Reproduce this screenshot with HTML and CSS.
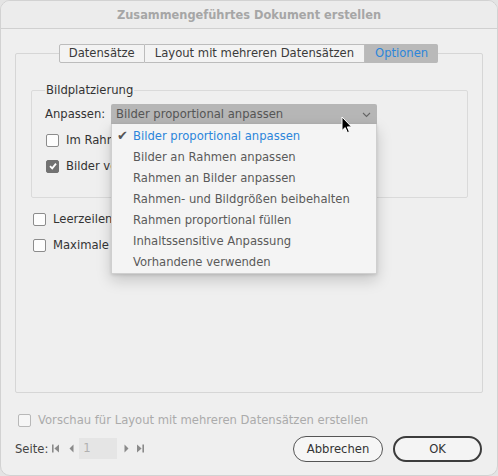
FILE: index.html
```html
<!DOCTYPE html>
<html lang="de">
<head>
<meta charset="utf-8">
<title>Zusammengeführtes Dokument erstellen</title>
<link rel="stylesheet" href="styles.css">
</head>
<body>
<div class="window">
  <div class="titlebar">Zusammengeführtes Dokument erstellen</div>
  <div class="content">
    <div class="tabbox">
      <div class="tabs">
        <div class="tab">Datensätze</div>
        <div class="tab">Layout mit mehreren Datensätzen</div>
        <div class="tab active">Optionen</div>
      </div>
      <fieldset class="group">
        <legend>Bildplatzierung</legend>
        <div class="row fit-row">
          <span class="label">Anpassen:</span>
          <div class="select">
            <span>Bilder proportional anpassen</span>
            <svg class="chev" width="9" height="6" viewBox="0 0 9 6"><path d="M1 1 L4.5 4.5 L8 1" fill="none" stroke="#666" stroke-width="1.1"/></svg>
          </div>
        </div>
        <label class="row check-row first"><span class="cb"></span>Im Rahmen zentrieren</label>
        <label class="row check-row"><span class="cb checked"><svg width="10" height="10" viewBox="0 0 10 10"><path d="M2 5.2 L4.2 7.4 L8 2.6" fill="none" stroke="#fff" stroke-width="1.8"/></svg></span>Bilder verknüpfen</label>
      </fieldset>
      <label class="row check-row outer first-outer"><span class="cb"></span>Leerzeilen für leere Felder entfernen</label>
      <label class="row check-row outer"><span class="cb"></span>Maximale Länge für Datensätze festlegen</label>
    </div>
    <label class="row preview"><span class="cb disabled"></span>Vorschau für Layout mit mehreren Datensätzen erstellen</label>
    <div class="footer">
      <div class="pager">
        <span class="seite">Seite:</span>
        <svg class="nav first" width="8" height="9" viewBox="0 0 8 9"><rect x="0" y="0.5" width="1.6" height="8" fill="#8a8a8a"/><path d="M7 0.5 L2.4 4.5 L7 8.5 Z" fill="#8a8a8a"/></svg>
        <svg class="nav prev" width="5" height="9" viewBox="0 0 5 9"><path d="M4.5 0.5 L0.5 4.5 L4.5 8.5 Z" fill="#8a8a8a"/></svg>
        <span class="pagefield">1</span>
        <svg class="nav next" width="5" height="9" viewBox="0 0 5 9"><path d="M0.5 0.5 L4.5 4.5 L0.5 8.5 Z" fill="#8a8a8a"/></svg>
        <svg class="nav last" width="8" height="9" viewBox="0 0 8 9"><path d="M1 0.5 L5.6 4.5 L1 8.5 Z" fill="#8a8a8a"/><rect x="6.4" y="0.5" width="1.6" height="8" fill="#8a8a8a"/></svg>
      </div>
      <div class="buttons">
        <button class="btn">Abbrechen</button>
        <button class="btn default">OK</button>
      </div>
    </div>
  </div>

  <div class="menu">
    <div class="item selected"><span class="tick">✔</span>Bilder proportional anpassen</div>
    <div class="item">Bilder an Rahmen anpassen</div>
    <div class="item">Rahmen an Bilder anpassen</div>
    <div class="item">Rahmen- und Bildgrößen beibehalten</div>
    <div class="item">Rahmen proportional füllen</div>
    <div class="item">Inhaltssensitive Anpassung</div>
    <div class="item">Vorhandene verwenden</div>
  </div>
  <svg class="cursor" width="12" height="18" viewBox="0 0 12 18"><path d="M1 1 L1 14.5 L4.2 11.6 L6.4 16.6 L8.4 15.7 L6.3 10.9 L10.6 10.9 Z" fill="#000" stroke="#fff" stroke-width="1" stroke-linejoin="round"/></svg>
</div>
</body>
</html>
```

FILE: styles.css
```css
html, body {
  margin: 0;
  padding: 0;
  background: #e4e4e4;
}
body {
  font-family: "DejaVu Sans", "Liberation Sans", sans-serif;
  font-size: 11.6px;
  color: #3a3a3a;
}
.window {
  position: relative;
  width: 498px;
  height: 476px;
  box-sizing: border-box;
  background: #efefef;
  border-radius: 10px;
  border: 1px solid #d2d2d2;
  overflow: hidden;
}
.titlebar {
  height: 27px;
  border-bottom: 1px solid #d0d0d0;
  background: #ececec;
  text-align: center;
  line-height: 28px;
  font-weight: bold;
  font-size: 11.4px;
  color: #a6a6a6;
}
.content {
  padding: 0 14px 0 14px;
}
.tabbox {
  margin-top: 24px;
  height: 340px;
  box-sizing: border-box;
  border: 1px solid #d6d6d6;
  border-radius: 2px;
  padding: 0 14px 0 15px;
}
.tabs {
  display: flex;
  justify-content: center;
  margin: -10px 0 0 -2px;
}
.tab {
  height: 17px;
  line-height: 17px;
  padding: 0 10px;
  border: 1px solid #bcbcbc;
  border-left: none;
  background: #f3f3f3;
  color: #3a3a3a;
}
.tab:first-child {
  border-left: 1px solid #bcbcbc;
  border-radius: 2px 0 0 2px;
  padding: 0 9px 0 9px;
}
.tab.active {
  background: #b9b9b9;
  border-color: #b9b9b9;
  color: #2c86db;
  border-radius: 0 2px 2px 0;
  padding: 0 9px 0 10px;
}
.group {
  margin: 20px 0 0 0;
  padding: 0 0 0 13px;
  height: 115px;
  box-sizing: border-box;
  border: 1px solid #dadada;
  border-radius: 2px;
}
.group legend {
  padding: 0 1px;
  margin-left: 0;
  color: #333;
}
.row {
  display: flex;
  align-items: center;
}
.fit-row {
  margin-top: 7px;
  height: 20px;
}
.label {
  width: 66px;
  color: #333;
}
.select {
  width: 266px;
  height: 20px;
  box-sizing: border-box;
  background: #b6b6b6;
  border-radius: 2px 2px 0 0;
  display: flex;
  align-items: center;
  justify-content: space-between;
  padding: 0 6px 0 5px;
  color: #555;
}
.chev { margin-top: 1px; }
.check-row {
  height: 26px;
  color: #333;
  white-space: nowrap;
}
.check-row.first { margin-top: 3px; }
.cb {
  width: 11px;
  height: 11px;
  border: 1px solid #8c8c8c;
  border-radius: 2px;
  background: #fdfdfd;
  margin: 0 7px 0 1px;
  display: inline-flex;
  align-items: center;
  justify-content: center;
  flex: none;
}
.cb.checked {
  background: #727272;
  border-color: #727272;
}
.cb.disabled {
  border-color: #b8b8b8;
  background: #f6f6f6;
}
.outer {
  margin-left: 1px;
}
.first-outer { margin-top: 8px; }
.preview {
  margin-top: 14px;
  margin-left: 2px;
  height: 26px;
  color: #ababab;
}
.preview .cb { margin-right: 7px; }
.footer {
  display: flex;
  justify-content: space-between;
  align-items: center;
  margin-top: 3px;
}
.pager {
  display: flex;
  align-items: center;
  color: #444;
  margin-top: -1px;
}
.seite { margin-right: 4px; }
.nav { flex: none; }
.first { margin-right: 9px; }
.prev { margin-right: 5px; }
.pagefield {
  width: 38px;
  height: 21px;
  line-height: 21px;
  background: #e5e5e5;
  color: #b0b0b0;
  padding-left: 4px;
  box-sizing: border-box;
  margin-right: 7px;
}
.next { margin-right: 7px; }
.buttons {
  display: flex;
  gap: 10px;
  margin-right: 1px;
}
.btn {
  font-family: inherit;
  font-size: 11.6px;
  color: #333;
  background: #f6f6f6;
  height: 26px;
  width: 90px;
  border: 1px solid #555;
  border-radius: 13px;
  padding: 0;
}
.btn.default {
  width: 89px;
  border: 2px solid #3c3c3c;
  background: #f4f4f4;
}
.menu {
  position: absolute;
  left: 110px;
  top: 123px;
  width: 266px;
  box-sizing: border-box;
  padding-top: 2px;
  background: #f4f4f4;
  border: 1px solid #cfcfcf;
  border-top: none;
  box-shadow: 0 6px 14px rgba(0,0,0,0.18), 0 1px 3px rgba(0,0,0,0.12);
}
.item {
  position: relative;
  height: 21px;
  line-height: 21px;
  padding-left: 21px;
  color: #5a5a5a;
}
.item.selected { color: #2c86db; }
.tick {
  position: absolute;
  left: 5px;
  top: -1px;
  color: #555;
  font-size: 13px;
}
.cursor {
  position: absolute;
  left: 340px;
  top: 115px;
}
```
